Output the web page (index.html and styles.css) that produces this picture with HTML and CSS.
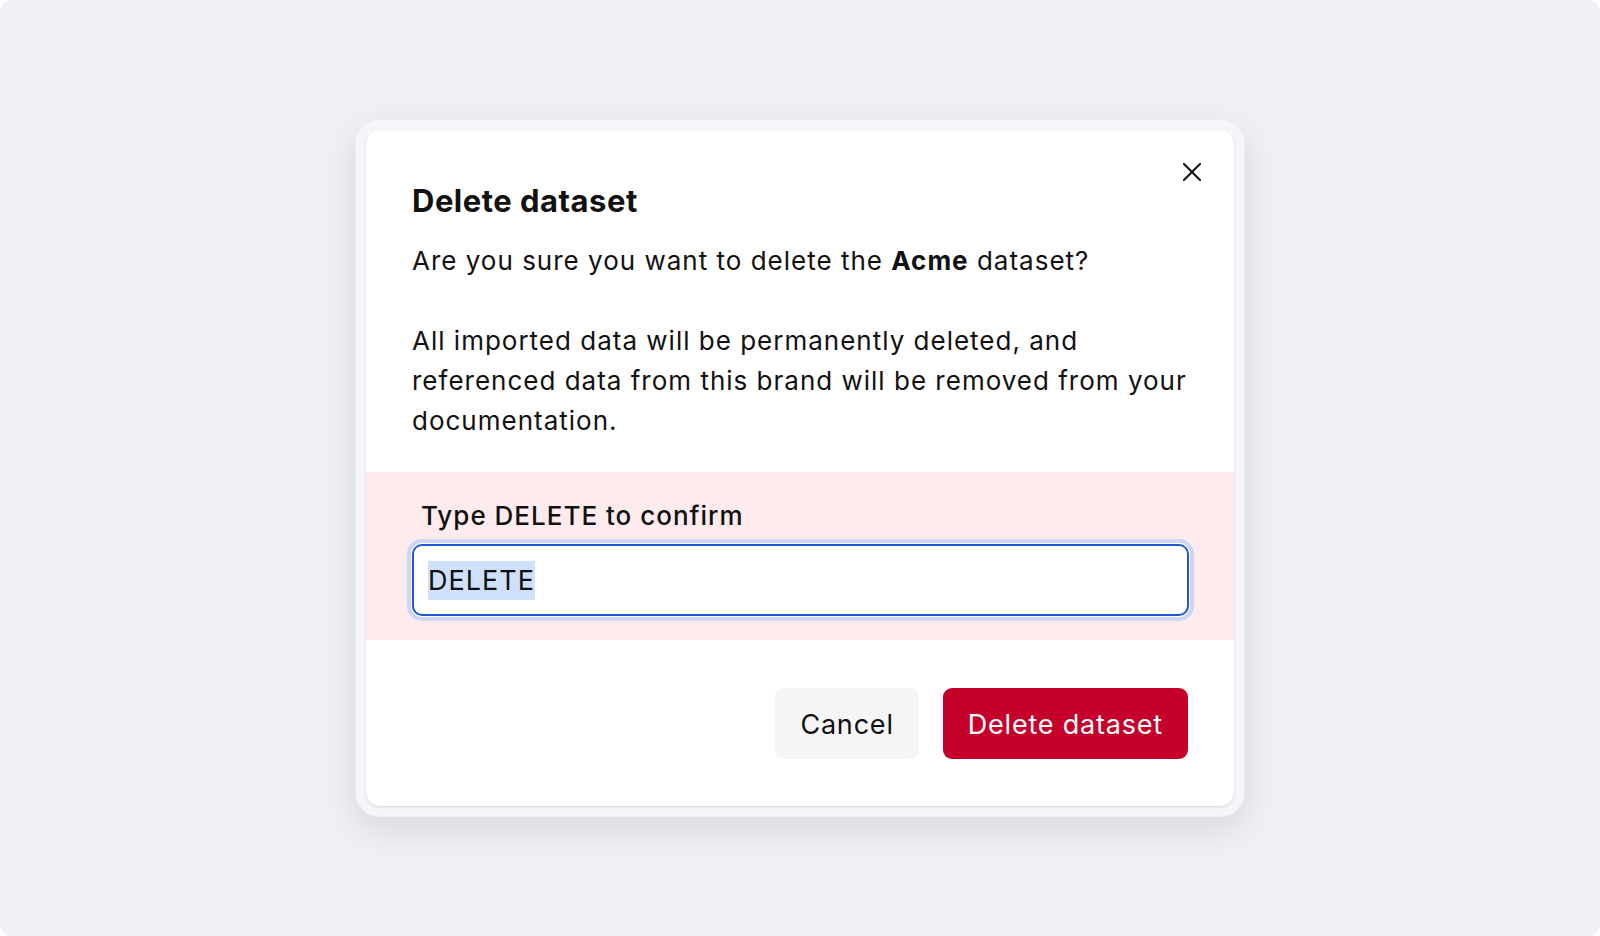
FILE: index.html
```html
<!DOCTYPE html>
<html lang="en">
<head>
  <meta charset="UTF-8" />
  <meta name="viewport" content="width=device-width, initial-scale=1.0"/>
  <title>Delete dataset</title>
  <link rel="stylesheet" href="styles.css">
</head>
<body>

  <div class="backdrop">
    <div class="modal-frame">
      <div class="modal" role="dialog" aria-labelledby="modal-title">
        <button class="close" aria-label="Close">
          <svg width="18" height="18" viewBox="0 0 18 18" fill="none" stroke="currentColor" stroke-width="2" stroke-linecap="square">
            <path d="M1 1L17 17M17 1L1 17"/>
          </svg>
        </button>

        <div class="modal-body">
          <h2 id="modal-title">Delete dataset</h2>
          <p>Are you sure you want to delete the <strong>Acme</strong> dataset?</p>
          <p>All imported data will be permanently deleted, and referenced data from this brand will be removed from your documentation.</p>
        </div>

        <div class="confirm">
          <label for="confirm-input">Type DELETE to confirm</label>
          <div class="text-field is-focused" id="confirm-input" role="textbox">
            <span class="selected">DELETE</span>
          </div>
        </div>

        <div class="modal-actions">
          <button class="btn btn-secondary">Cancel</button>
          <button class="btn btn-danger">Delete dataset</button>
        </div>
      </div>
    </div>
  </div>

</body>
</html>
```

FILE: styles.css
```css
:root {
  --bg: #eef0f5;
  --text: #111;
  --danger: #c4002b;
  --danger-soft: #fdebee;
  --focus: #1d58d8;
  --focus-ring: #cdd6f5;
}

* {
  box-sizing: border-box;
}

html {
  background: #fff;
}

body {
  margin: 0;
  font-family: Inter, 'Noto Sans', sans-serif;
  color: var(--text);
}

.backdrop {
  height: 936px;
  background: var(--bg);
  border-radius: 12px;
  display: flex;
  align-items: center;
  justify-content: center;
}

.modal-frame {
  padding: 10px;
  border-radius: 24px;
  background: rgba(255, 255, 255, 0.4);
  border: 1px solid rgba(0, 0, 0, 0.035);
  box-shadow: 0 12px 32px rgba(20, 24, 40, 0.1);
}

.modal {
  position: relative;
  width: 868px;
  background: #fff;
  border-radius: 14px;
  box-shadow: 0 1px 3px rgba(0, 0, 0, 0.14);
  overflow: hidden;
}

.close {
  position: absolute;
  top: 24px;
  right: 24px;
  width: 36px;
  height: 36px;
  display: flex;
  align-items: center;
  justify-content: center;
  padding: 0;
  border: none;
  background: transparent;
  color: var(--text);
  cursor: pointer;
}

.modal-body {
  padding: 51px 46px 31px;
}

.modal-body h2 {
  margin: 0 0 20px;
  font-size: 31px;
  line-height: 40px;
  font-weight: 700;
  letter-spacing: 0.5px;
}

.modal-body p {
  margin: 0;
  font-size: 26px;
  line-height: 40px;
  letter-spacing: 1px;
}

.modal-body p + p {
  margin-top: 40px;
}

.modal-body strong {
  font-weight: 700;
}

.confirm {
  background: var(--danger-soft);
  padding: 26px 45px 24px 46px;
}

.confirm label {
  display: block;
  padding-left: 9px;
  margin-bottom: 10px;
  font-size: 26px;
  line-height: 36px;
  font-weight: 500;
  letter-spacing: 1px;
}

.text-field {
  height: 72px;
  display: flex;
  align-items: center;
  padding: 0 14px;
  background: #fff;
  border: 2px solid #c9ccd4;
  border-radius: 10px;
  font-size: 27px;
  letter-spacing: 1px;
}

.text-field.is-focused {
  border-color: var(--focus);
  box-shadow: 0 0 0 1px #fff, 0 0 0 5px var(--focus-ring);
}

.text-field .selected {
  background: #cfe0fc;
  line-height: 39px;
}

.modal-actions {
  display: flex;
  justify-content: flex-end;
  gap: 24px;
  padding: 48px 46px 47px;
}

.btn {
  height: 71px;
  padding: 2px 25px 0;
  border: none;
  border-radius: 9px;
  font-family: inherit;
  font-size: 27px;
  letter-spacing: 0.8px;
  cursor: pointer;
}

.btn-secondary {
  background: #f5f5f5;
  color: var(--text);
}

.btn-danger {
  background: var(--danger);
  color: #fff;
}
```
